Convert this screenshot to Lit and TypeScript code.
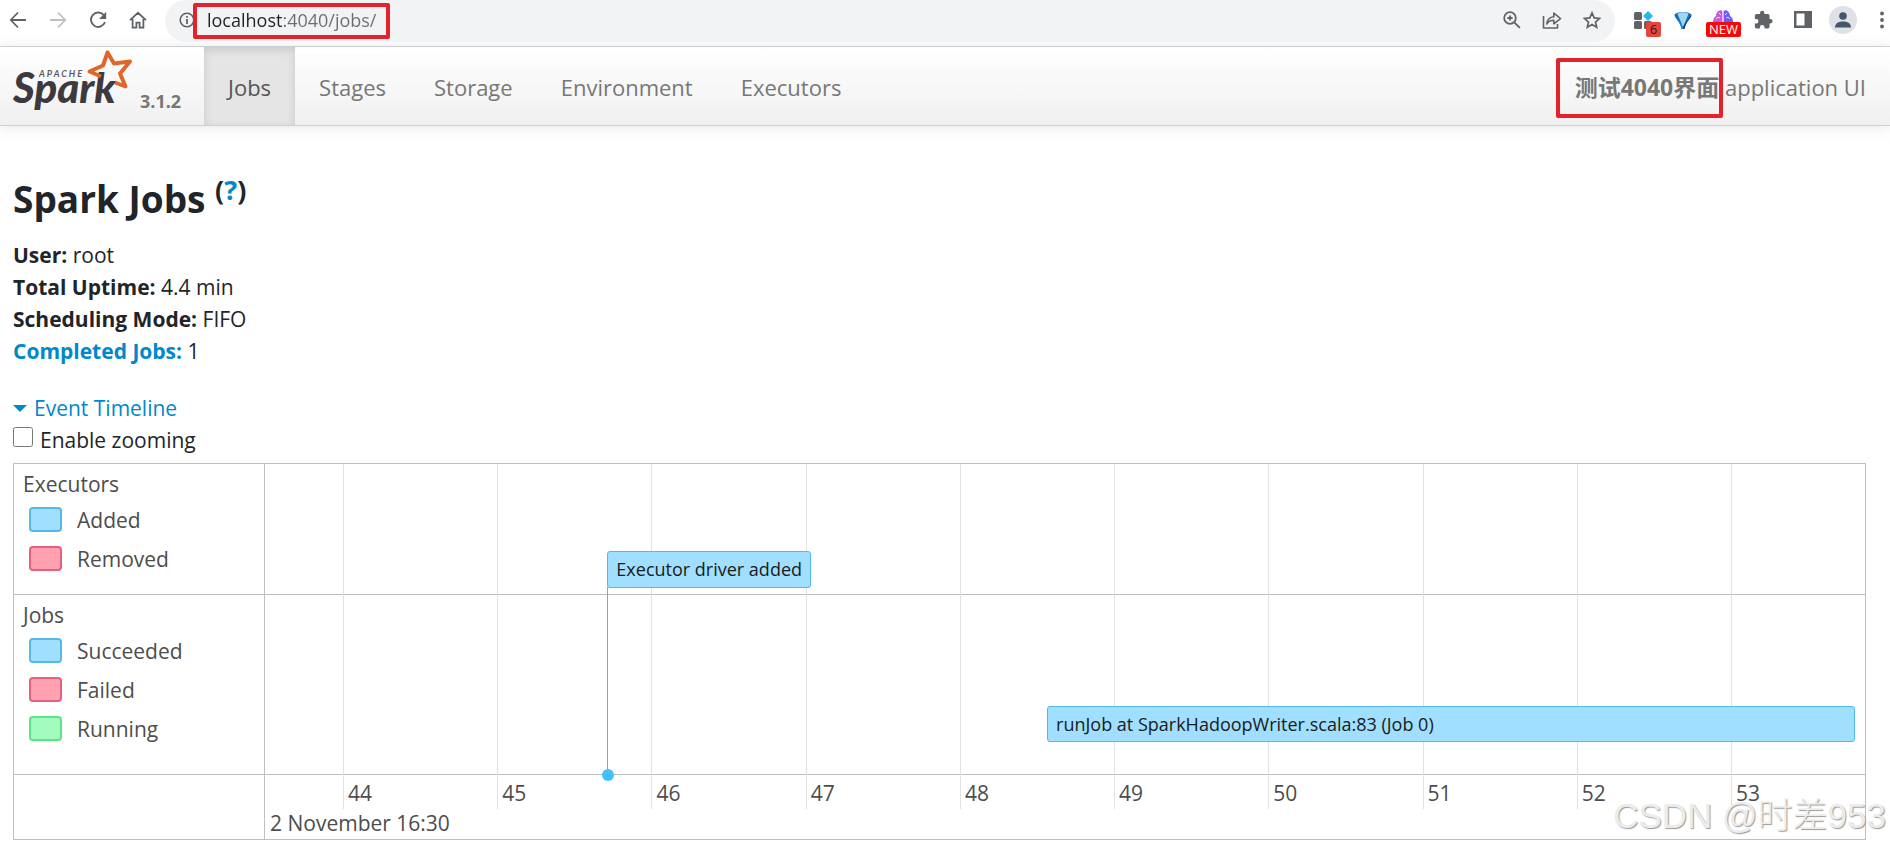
import { LitElement, html, css } from "lit";
import { customElement, state } from "lit/decorators.js";
import { classMap } from "lit/directives/class-map.js";

const FONT = css`"Open Sans", "Noto Sans CJK SC", sans-serif`;

@customElement("browser-bar")
class BrowserBar extends LitElement {
  static styles = css`
    :host {
      display: flex;
      align-items: center;
      height: 46px;
      padding-left: 4px;
      border-bottom: 1px solid #d5d7d9;
      background: #fff;
      font-family: ${FONT};
      overflow: hidden;
    }
    button {
      display: flex;
      align-items: center;
      justify-content: center;
      width: 40px;
      height: 40px;
      padding: 0 0 1px;
      flex: none;
      border: 0;
      background: none;
      color: #5f6368;
      font: inherit;
    }
    button svg { display: block; flex: none; }
    .nav { margin-top: -6px; width: 161px; display: flex; flex: none; }
    .nav button { padding: 0 13px 0 0; }
    .off { color: #bdc1c6; }
    .address {
      flex: 1;
      display: flex;
      align-items: center;
      height: 42px;
      margin-top: -4px;
      padding: 0 3px 0 6px;
      border-radius: 21px;
      background: #f1f3f4;
      min-width: 0;
    }
    .address button { padding: 0 0 2px; }
    .address .info { width: 32px; }
    .address label { position: relative; flex: none; margin-left: -10px; }
    .address label::after {
      content: "";
      position: absolute;
      inset: 0;
      border: 4px solid #e4222b;
      border-radius: 2px;
      pointer-events: none;
    }
    input {
      display: block;
      width: 197px;
      height: 36px;
      box-sizing: border-box;
      padding: 0 0 2px 14px;
      border: 0;
      outline: 0;
      font: 18px/24px ${FONT};
      background: linear-gradient(90deg, #202124 89px, #6a6e73 89px);
      -webkit-background-clip: text;
      background-clip: text;
      -webkit-text-fill-color: transparent;
    }
    .space { flex: 1; }
    .tools { display: flex; flex: none; margin-top: -6px; padding-left: 8px; }
    .tools button { position: relative; }
    .tools .menu { width: 27px; padding-right: 6px; justify-content: flex-end; }
    .count, .new {
      position: absolute;
      top: 22px;
      background: #e8453c;
      color: #202124;
      font-size: 13px;
      line-height: 15px;
      border-radius: 2px;
      text-align: center;
    }
    .count { left: 23px; width: 15px; }
    .new { left: 3px; width: 35px; background: #f50a0a; color: #fff; }
    .raised { margin-top: -8px; }
  `;

  render() {
    return html`
      <div class="nav">
        <button aria-label="Back"><svg width="18" height="18" viewBox="0 0 18 18" fill="none" stroke="currentColor" stroke-width="1.8"><path d="M17 9H2M9 1.5 1.8 9 9 16.5" /></svg></button>
        <button class="off" aria-label="Forward"><svg width="18" height="18" viewBox="0 0 18 18" fill="none" stroke="currentColor" stroke-width="1.8"><path d="M1 9h15M9 1.5 16.2 9 9 16.5" /></svg></button>
        <button aria-label="Reload"><svg width="18" height="18" viewBox="0 0 18 18"><path d="M14.8 4.2A7.2 7.2 0 1 0 16 11" fill="none" stroke="currentColor" stroke-width="1.9" /><path d="M17.2.8v7.2H10z" fill="currentColor" /></svg></button>
        <button aria-label="Home"><svg width="18" height="18" viewBox="0 0 18 18" fill="none" stroke="currentColor" stroke-width="1.8"><path d="M1 9.2 9 1.8l8 7.4M3.6 8v8.6h3.8v-5h3.2v5h3.8V8" /></svg></button>
      </div>
      <div class="address">
        <button class="info" aria-label="Site information"><svg width="16" height="16" viewBox="0 0 16 16"><circle cx="8" cy="8" r="6.8" fill="none" stroke="currentColor" stroke-width="1.6" /><path d="M7.1 7h1.8v5H7.1zM7.1 4h1.8v1.8H7.1z" fill="currentColor" /></svg></button>
        <label><input aria-label="Address" value="localhost:4040/jobs/" spellcheck="false" /></label>
        <span class="space"></span>
        <button aria-label="Zoom"><svg width="18" height="18" viewBox="0 0 18 18" fill="none" stroke="currentColor" stroke-width="1.8"><circle cx="7" cy="7" r="5.8" /><path d="m11.3 11.3 5.6 5.6M7 4.4v5.2M4.4 7h5.2" /></svg></button>
        <button aria-label="Share"><svg width="20" height="18" viewBox="0 0 20 18" fill="none" stroke="currentColor" stroke-width="1.6" stroke-linejoin="round"><path d="M1.5 5v12h14v-4M4.8 13c.6-4.6 3-6.9 7-7.2V2l6.7 5.600-6.700 5.200V9.300c-3.200 0-5.300 1-7 3.700z" /></svg></button>
        <button aria-label="Bookmark"><svg width="18" height="18" viewBox="0 0 18 18" fill="none" stroke="currentColor" stroke-width="1.7"><path d="m9 1.900 2.200 5 5.400.5-4.100 3.600 1.200 5.300L9 13.500l-4.700 2.800 1.200-5.300L1.400 7.400l5.400-.5z" /></svg></button>
      </div>
      <div class="tools">
        <button aria-label="Extensions, 6"><svg width="20" height="18" viewBox="0 0 20 18"><rect x="1" y="1" width="8" height="8" rx="1.500" fill="#5f6368" /><rect x="1" y="10" width="8" height="8" rx="1.500" fill="#5f6368" /><rect x="11" y="10" width="8" height="8" rx="1.500" fill="#5f6368" /><path d="m15 0 5 5-5 5-5-5z" fill="#22b8f0" /></svg><span class="count">6</span></button>
        <button aria-label="Diamond extension"><svg width="18" height="18" viewBox="0 0 18 18"><path d="M.5 4C2 0 16 0 17.500 4 17 8 12 10 10.500 18h-3C6 10 1 8 .5 4z" fill="#1769b0" /><path d="M3.500 3C6 .5 12 .5 14.500 3L9 16z" fill="#9bd8f5" /><path d="M.5 4 9 16l-1.500 2C6 10 1 8 .5 4z" fill="#2a9be0" /><path d="M17.500 4 9 16l1.500 2C12 10 17 8 17.500 4z" fill="#0b3a70" /></svg></button>
        <button aria-label="New extension"><svg class="raised" width="22" height="14" viewBox="0 0 22 14"><path d="M1 13c0-3 1-5 3-6 0-4 4-7 6.400-5v11z" fill="#c85be0" /><path d="M21 13c0-3-1-5-3-6 0-4-4-7-6.400-5v11z" fill="#6d5cf0" /><path d="M4 10c1-2 3-2 4-1M18 10c-1-2-3-2-4-1M7 4l2 2M15 4l-2 2" stroke="#ffd7f3" fill="none" /></svg><span class="new">NEW</span></button>
        <button aria-label="Extensions"><svg width="19" height="19" viewBox="0 0 22 22"><path fill="currentColor" d="M19 10.500h-1V6.500a2 2 0 0 0-2-2h-4V3.400a2.500 2.500 0 0 0-5 0v1.100H3a2 2 0 0 0-2 2v3.800h1.500a2.700 2.700 0 0 1 0 5.400H1V19.500a2 2 0 0 0 2 2h3.800V20a2.700 2.700 0 0 1 5.400 0v1.500H16a2 2 0 0 0 2-2v-4h1a2.500 2.500 0 0 0 0-5z" /></svg></button>
        <button aria-label="Side panel"><svg width="18" height="17" viewBox="0 0 18 17"><path fill="currentColor" fill-rule="evenodd" d="M0 0h18v17H0zM2.500 2.500v12h8v-12z" /></svg></button>
        <button aria-label="Profile"><svg width="28" height="28" viewBox="0 0 28 28"><circle cx="14" cy="14" r="14" fill="#dee1e6" /><circle cx="14" cy="10" r="3.800" fill="#44546a" /><path d="M6 21.500c0-4.500 4-6 8-6s8 1.500 8 6z" fill="#44546a" /></svg></button>
        <button class="menu" aria-label="Menu"><svg width="4" height="18" viewBox="0 0 4 18" fill="currentColor"><circle cx="2" cy="2.500" r="1.900" /><circle cx="2" cy="9" r="1.900" /><circle cx="2" cy="15.500" r="1.900" /></svg></button>
      </div>
    `;
  }
}

@customElement("spark-navbar")
class SparkNavbar extends LitElement {
  static styles = css`
    :host {
      display: flex;
      height: 78px;
      padding: 0 24px 0 13px;
      border-bottom: 1px solid #d0d0d0;
      background: linear-gradient(#fff, #f0f0f0);
      box-shadow: 0 1px 14px rgba(0, 0, 0, 0.1);
      font: 22px/32px ${FONT};
      color: #777;
    }
    a { color: inherit; text-decoration: none; }
    .brand { display: flex; flex: none; width: 191px; }
    .brand svg { display: block; flex: none; }
    .version { font-size: 18px; line-height: 24px; font-weight: 700; margin: 42px 0 0 7px; }
    nav { display: flex; flex: 1; }
    nav a { padding: 24px 24px 22px; }
    nav .active { color: #555; background: #e5e5e5; box-shadow: inset 0 3px 8px rgba(0, 0, 0, 0.125); }
    .app { margin: 0; padding: 24px 0 0; white-space: nowrap; }
    .app strong { position: relative; font-size: 23px; line-height: 32px; }
    .app strong::after {
      content: "";
      position: absolute;
      inset: -13px -4px -15px -19px;
      border: 4px solid #e4222b;
      border-radius: 2px;
    }
  `;

  render() {
    const tabs = ["Jobs", "Stages", "Storage", "Environment", "Executors"];
    return html`
      <a class="brand" href="#" aria-label="Apache Spark 3.1.2">
        <svg width="120" height="70" viewBox="0 0 120 70">
          <text x="26" y="30" font-family="Lato" font-weight="700" font-style="italic" font-size="9" letter-spacing="2" fill="#5a5a5c">APACHE</text>
          <text x="0" y="56" font-family="Lato" font-weight="900" font-style="italic" font-size="42" fill="#3c3a3e">Spark</text>
          <path d="M88 29.500 76.500 24.500 90 18.500 94.500 5.500l6.500 11 16 -2-10 12 5.500 13-10.500-4" fill="none" stroke="#e0672b" stroke-width="4" stroke-linejoin="round" />
        </svg>
        <span class="version">3.1.2</span>
      </a>
      <nav>
        ${tabs.map((t, i) => html`<a href="#" class=${classMap({ active: i === 0 })}>${t}</a>`)}
      </nav>
      <p class="app"><strong>测试4040界面</strong> application UI</p>
    `;
  }
}

type Kind = "ok" | "bad" | "run";

@customElement("event-timeline")
class EventTimeline extends LitElement {
  static styles = css`
    :host {
      display: grid;
      grid-template-columns: 251px 1fr;
      position: relative;
      border: 1px solid #bfbfbf;
      font: 21px/32px ${FONT};
      color: #4d4d4d;
    }
    .group { border-right: 1px solid #bfbfbf; border-bottom: 1px solid #bfbfbf; padding: 4px 0 16px 9px; }
    .group + .lane + .group { padding-bottom: 26px; }
    .group h4 { margin: 0; font: inherit; }
    .group ul { list-style: none; margin: 0; padding: 0 0 0 6px; }
    .group li { display: flex; align-items: center; gap: 15px; height: 39px; }
    .swatch { width: 33px; height: 25px; box-sizing: border-box; border: 2px solid; border-radius: 4px; }
    .ok { background: #a0dfff; border-color: #52b9e8; }
    .bad { background: #ffa1b0; border-color: #e8607c; }
    .run { background: #a2fcc0; border-color: #5ce584; }
    .lane { border-bottom: 1px solid #bfbfbf; }
    .corner { border-right: 1px solid #bfbfbf; }
    .axis { height: 64px; padding-left: 5px; display: flex; align-items: flex-end; box-sizing: border-box; }
    .canvas { position: absolute; left: 251px; right: 0; top: 0; bottom: 0; }
    .tick { position: absolute; top: 0; bottom: 30px; border-left: 1px solid #e2e2e2; padding-left: 4px; display: flex; align-items: flex-end; }
    .item {
      position: absolute;
      box-sizing: border-box;
      padding: 0 8px;
      border: 1px solid #52b9e8;
      border-radius: 3px;
      font-size: 18px;
      line-height: 35px;
      color: #1a1a1a;
      white-space: nowrap;
    }
    .point { top: 87px; }
    .range { bottom: 97px; line-height: 34px; }
    .stem { position: absolute; top: 123px; bottom: 65px; border-left: 1px solid #52b9e8; }
    .stem::after { content: ""; position: absolute; left: -6px; bottom: -7px; width: 12px; height: 12px; border-radius: 50%; background: #40c0ff; }
  `;

  private start = 43.494;
  private span = 10.375;

  private at(seconds: number) {
    return `${((seconds - this.start) / this.span) * 100}%`;
  }

  private group(title: string, rows: [Kind, string][]) {
    return html`
      <section class="group">
        <h4>${title}</h4>
        <ul>${rows.map(([kind, name]) => html`<li><span class="swatch ${kind}"></span>${name}</li>`)}</ul>
      </section>
      <div class="lane"></div>
    `;
  }

  render() {
    const ticks = [44, 45, 46, 47, 48, 49, 50, 51, 52, 53];
    return html`
      ${this.group("Executors", [["ok", "Added"], ["bad", "Removed"]])}
      ${this.group("Jobs", [["ok", "Succeeded"], ["bad", "Failed"], ["run", "Running"]])}
      <div class="corner"></div>
      <div class="axis">2 November 16:30</div>
      <div class="canvas">
        ${ticks.map((t) => html`<div class="tick" style="left:${this.at(t)}">${t}</div>`)}
        <div class="stem" style="left:${this.at(45.714)}"></div>
        <div class="item point ok" style="left:${this.at(45.714)}">Executor driver added</div>
        <div class="item range ok" style="left:${this.at(48.565)};right:calc(100% - ${this.at(53.806)})">runJob at SparkHadoopWriter.scala:83 (Job 0)</div>
      </div>
    `;
  }
}

@customElement("app-root")
class AppRoot extends LitElement {
  static styles = css`
    :host {
      display: block;
      position: relative;
      min-height: 100vh;
      background: #fff;
      font: 21px/32px ${FONT};
      color: #212529;
      overflow: hidden;
    }
    a { color: #0088cc; text-decoration: none; }
    main { padding: 48px 24px 8px 13px; }
    h3 { margin: 0 0 15px; font-size: 37px; line-height: 50px; font-weight: 700; }
    sup { font-size: 27px; line-height: 0; vertical-align: 13px; }
    .summary { list-style: none; margin: 0 0 25px; padding: 0; }
    .toggle { display: flex; align-items: center; gap: 7px; padding: 0; border: 0; background: none; font: inherit; color: #0088cc; }
    .caret { border: 7px solid transparent; border-top-color: #0088cc; border-bottom: 0; }
    .zoom { display: flex; align-items: center; gap: 7px; margin-bottom: 7px; }
    .zoom input { width: 20px; height: 20px; margin: 0 0 6px; }
    .mark {
      position: absolute;
      right: 4px;
      bottom: 9px;
      font: 35px/48px "Liberation Sans", "Noto Sans CJK SC", sans-serif;
      font-weight: 300;
      color: #ececec;
      text-shadow: 1px 1px 1px #999;
    }
  `;

  @state() private open = true;

  render() {
    return html`
      <browser-bar></browser-bar>
      <spark-navbar></spark-navbar>
      <main>
        <h3>Spark Jobs <sup>(<a href="#">?</a>)</sup></h3>
        <ul class="summary">
          <li><strong>User:</strong> root</li>
          <li><strong>Total Uptime:</strong> 4.4 min</li>
          <li><strong>Scheduling Mode:</strong> FIFO</li>
          <li><a href="#"><strong>Completed Jobs:</strong></a> 1</li>
        </ul>
        <button class="toggle" @click=${() => (this.open = !this.open)}><span class="caret"></span>Event Timeline</button>
        ${this.open
          ? html`<label class="zoom"><input type="checkbox" />Enable zooming</label>
              <event-timeline></event-timeline>`
          : null}
      </main>
      <div class="mark">CSDN @时差953</div>
    `;
  }
}
